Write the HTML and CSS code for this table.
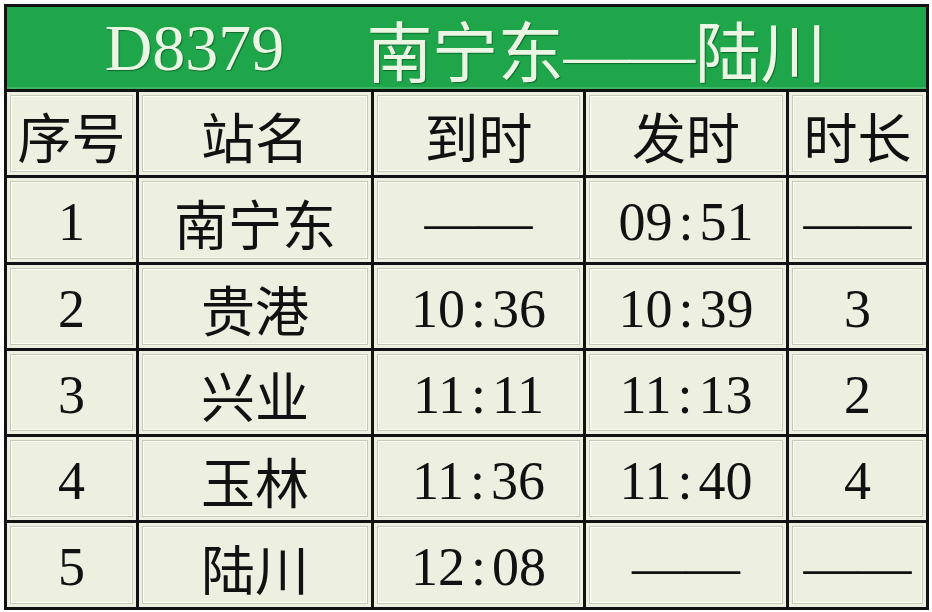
FILE: index.html
```html
<!DOCTYPE html>
<html lang="zh-CN">
<head>
<meta charset="utf-8">
<title>D8379 南宁东——陆川</title>
<link rel="stylesheet" href="styles.css">
</head>
<body>
<div class="board">
  <div class="title"><span class="train">D8379</span><span class="route">南宁东——陆川</span></div>

  <div class="cell">序号</div>
  <div class="cell">站名</div>
  <div class="cell">到时</div>
  <div class="cell">发时</div>
  <div class="cell">时长</div>

  <div class="cell">1</div>
  <div class="cell">南宁东</div>
  <div class="cell">——</div>
  <div class="cell">09<span class="colon">:</span>51</div>
  <div class="cell">——</div>

  <div class="cell">2</div>
  <div class="cell">贵港</div>
  <div class="cell">10<span class="colon">:</span>36</div>
  <div class="cell">10<span class="colon">:</span>39</div>
  <div class="cell">3</div>

  <div class="cell">3</div>
  <div class="cell">兴业</div>
  <div class="cell">11<span class="colon">:</span>11</div>
  <div class="cell">11<span class="colon">:</span>13</div>
  <div class="cell">2</div>

  <div class="cell">4</div>
  <div class="cell">玉林</div>
  <div class="cell">11<span class="colon">:</span>36</div>
  <div class="cell">11<span class="colon">:</span>40</div>
  <div class="cell">4</div>

  <div class="cell">5</div>
  <div class="cell">陆川</div>
  <div class="cell">12<span class="colon">:</span>08</div>
  <div class="cell">——</div>
  <div class="cell">——</div>
</div>
</body>
</html>
```

FILE: styles.css
```css
html, body {
  margin: 0;
  padding: 0;
  background: #ffffff;
}

body {
  font-family: "Liberation Serif", "Noto Sans CJK SC", serif;
  color: #111111;
}

.board {
  margin: 4px 0 0 4px;
  width: 925px;
  box-sizing: border-box;
  display: grid;
  grid-template-columns: 129px 232px 209px 200px 137px;
  grid-template-rows: 82px 83px 84px 83px 83px 83px 84px;
  gap: 3px;
  padding: 3px;
  background: #121212;
}

.title {
  grid-column: 1 / -1;
  background: #1fa64b;
  color: #eaf6e3;
  font-size: 66px;
  display: flex;
  align-items: center;
  justify-content: center;
  gap: 82px;
  text-shadow: 1px 1px 1px rgba(0, 60, 20, 0.55);
  white-space: nowrap;
  box-shadow: inset 0 -2px 0 #3cb464;
  padding-right: 2px;
}

.route {
  letter-spacing: -0.3px;
}

.cell {
  background: #edefe0;
  font-size: 54px;
  display: flex;
  align-items: center;
  justify-content: center;
  white-space: nowrap;
  padding-top: 4px;
  box-sizing: border-box;
  box-shadow:
    inset 0 0 0 3px #edefe0,
    inset 0 0 0 4px #c7c9ba,
    inset 0 0 0 5px #fbfcf4;
}

.colon {
  display: inline-block;
  width: 0.5em;
  text-align: center;
}
```
